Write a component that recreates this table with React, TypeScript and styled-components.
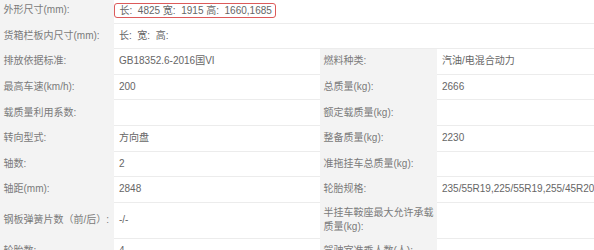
import styled, { createGlobalStyle } from 'styled-components';

const GlobalStyle = createGlobalStyle`
  html, body {
    margin: 0;
    padding: 0;
    background: #ffffff;
  }

  body {
    font-family: "Liberation Sans", "Noto Sans CJK SC", sans-serif;
    font-size: 10px;
    overflow: hidden;
  }
`;

const Table = styled.div`
  width: 594px;
  margin-top: -2px;
`;

const Row = styled.div`
  display: grid;
  grid-template-columns: 114px 206px 117px 1fr;
`;

const Label = styled.div`
  box-sizing: border-box;
  min-height: 25.6px;
  padding: 3.5px 3px 3.5px 3.5px;
  display: flex;
  align-items: center;
  line-height: 14px;
  color: #7a7a7a;
  background-color: #f3f3f3;
  border-bottom: 1px solid #f3f3f3;
`;

const Value = styled.div<{ $span?: boolean }>`
  box-sizing: border-box;
  min-height: 25.6px;
  padding: 3.5px 5px;
  display: flex;
  align-items: center;
  line-height: 14px;
  color: #666666;
  border-bottom: 1px solid #ececec;
  white-space: pre;
  overflow: hidden;
  grid-column: ${(p) => (p.$span ? 'span 3' : 'auto')};
`;

const Highlight = styled.span`
  display: inline-block;
  margin-left: -5px;
  padding: 0 3px 0 4.5px;
  line-height: 13px;
  border: 1.5px solid #dc5a5a;
  border-radius: 3px;
`;

type Cell = { label: string; value?: string };

const wide: Cell[] = [
  { label: '货箱栏板内尺寸(mm):', value: '长:  宽:  高:' },
];

const pairs: [Cell, Cell][] = [
  [
    { label: '排放依据标准:', value: 'GB18352.6-2016国VI' },
    { label: '燃料种类:', value: '汽油/电混合动力' },
  ],
  [
    { label: '最高车速(km/h):', value: '200' },
    { label: '总质量(kg):', value: '2666' },
  ],
  [{ label: '载质量利用系数:' }, { label: '额定载质量(kg):' }],
  [
    { label: '转向型式:', value: '方向盘' },
    { label: '整备质量(kg):', value: '2230' },
  ],
  [{ label: '轴数:', value: '2' }, { label: '准拖挂车总质量(kg):' }],
  [
    { label: '轴距(mm):', value: '2848' },
    { label: '轮胎规格:', value: '235/55R19,225/55R19,255/45R20' },
  ],
  [
    { label: '钢板弹簧片数（前/后）:', value: '-/-' },
    { label: '半挂车鞍座最大允许承载质量(kg):' },
  ],
  [{ label: '轮胎数:', value: '4' }, { label: '驾驶室准乘人数(人):' }],
];

const App = () => {
  return (
    <>
      <GlobalStyle />
      <Table>
        <Row>
          <Label>外形尺寸(mm):</Label>
          <Value $span>
            <Highlight>{'长:  4825 宽:  1915 高:  1660,1685'}</Highlight>
          </Value>
        </Row>
        {wide.map((cell) => (
          <Row key={cell.label}>
            <Label>{cell.label}</Label>
            <Value $span>{cell.value}</Value>
          </Row>
        ))}
        {pairs.map(([left, right]) => (
          <Row key={left.label}>
            <Label>{left.label}</Label>
            <Value>{left.value}</Value>
            <Label>{right.label}</Label>
            <Value>{right.value}</Value>
          </Row>
        ))}
      </Table>
    </>
  );
};

export default App;
